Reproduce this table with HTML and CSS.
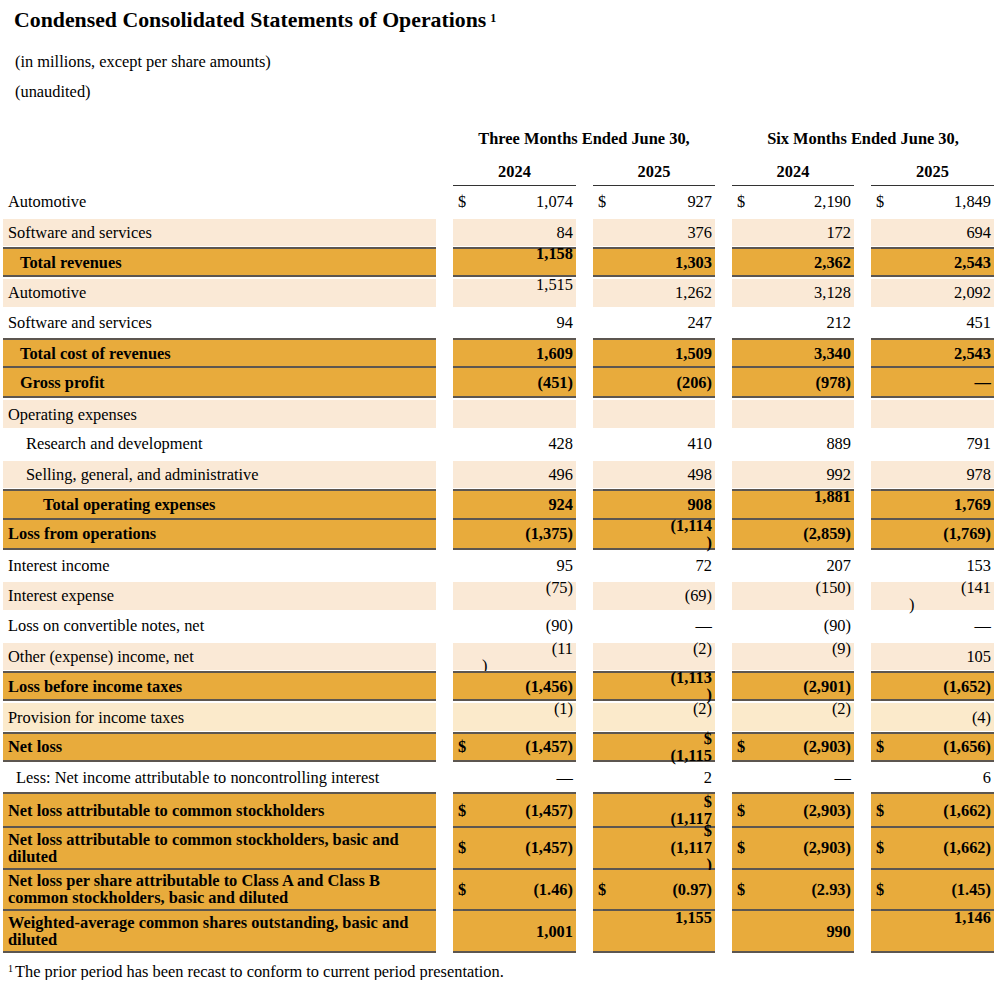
FILE: index.html
```
<!DOCTYPE html>
<html lang="en">
<head>
<meta charset="utf-8">
<title>Condensed Consolidated Statements of Operations</title>
<link rel="stylesheet" href="styles.css">
</head>
<body>
<div class="page">
  <h1 class="title">Condensed Consolidated Statements of Operations<sup class="fn">1</sup></h1>
  <p class="note first">(in millions, except per share amounts)</p>
  <p class="note">(unaudited)</p>

  <div class="sheet">
    <div class="hrow">
      <div class="blank"></div>
      <div class="period">Three Months Ended June 30,</div>
      <div class="period">Six Months Ended June 30,</div>
    </div>
    <div class="hrow years">
      <div class="blank"></div>
      <div class="year">2024</div>
      <div class="year">2025</div>
      <div class="year">2024</div>
      <div class="year">2025</div>
    </div>

    <div class="row">
      <div class="lbl">Automotive</div>
      <div class="v"><span class="cur">$</span><span class="num">1,074</span></div>
      <div class="v"><span class="cur">$</span><span class="num">927</span></div>
      <div class="v"><span class="cur">$</span><span class="num">2,190</span></div>
      <div class="v"><span class="cur">$</span><span class="num">1,849</span></div>
    </div>
    <div class="row light">
      <div class="lbl">Software and services</div>
      <div class="v"><span class="num">84</span></div>
      <div class="v"><span class="num">376</span></div>
      <div class="v"><span class="num">172</span></div>
      <div class="v"><span class="num">694</span></div>
    </div>
    <div class="row total">
      <div class="lbl i1">Total revenues</div>
      <div class="v"><span class="num up">1,158</span></div>
      <div class="v"><span class="num">1,303</span></div>
      <div class="v"><span class="num">2,362</span></div>
      <div class="v"><span class="num">2,543</span></div>
    </div>
    <div class="row light">
      <div class="lbl">Automotive</div>
      <div class="v"><span class="num up">1,515</span></div>
      <div class="v"><span class="num">1,262</span></div>
      <div class="v"><span class="num">3,128</span></div>
      <div class="v"><span class="num">2,092</span></div>
    </div>
    <div class="row">
      <div class="lbl">Software and services</div>
      <div class="v"><span class="num">94</span></div>
      <div class="v"><span class="num">247</span></div>
      <div class="v"><span class="num">212</span></div>
      <div class="v"><span class="num">451</span></div>
    </div>
    <div class="row total">
      <div class="lbl i1">Total cost of revenues</div>
      <div class="v"><span class="num">1,609</span></div>
      <div class="v"><span class="num">1,509</span></div>
      <div class="v"><span class="num">3,340</span></div>
      <div class="v"><span class="num">2,543</span></div>
    </div>
    <div class="row total">
      <div class="lbl i1">Gross profit</div>
      <div class="v"><span class="num">(451)</span></div>
      <div class="v"><span class="num">(206)</span></div>
      <div class="v"><span class="num">(978)</span></div>
      <div class="v"><span class="num">—</span></div>
    </div>
    <div class="row light">
      <div class="lbl">Operating expenses</div>
      <div class="v"></div>
      <div class="v"></div>
      <div class="v"></div>
      <div class="v"></div>
    </div>
    <div class="row">
      <div class="lbl i2">Research and development</div>
      <div class="v"><span class="num">428</span></div>
      <div class="v"><span class="num">410</span></div>
      <div class="v"><span class="num">889</span></div>
      <div class="v"><span class="num">791</span></div>
    </div>
    <div class="row light">
      <div class="lbl i2">Selling, general, and administrative</div>
      <div class="v"><span class="num">496</span></div>
      <div class="v"><span class="num">498</span></div>
      <div class="v"><span class="num">992</span></div>
      <div class="v"><span class="num">978</span></div>
    </div>
    <div class="row total">
      <div class="lbl i3">Total operating expenses</div>
      <div class="v"><span class="num">924</span></div>
      <div class="v"><span class="num">908</span></div>
      <div class="v"><span class="num up">1,881</span></div>
      <div class="v"><span class="num">1,769</span></div>
    </div>
    <div class="row total">
      <div class="lbl">Loss from operations</div>
      <div class="v"><span class="num">(1,375)</span></div>
      <div class="v"><span class="num">(1,114<br>)</span></div>
      <div class="v"><span class="num">(2,859)</span></div>
      <div class="v"><span class="num">(1,769)</span></div>
    </div>
    <div class="row">
      <div class="lbl">Interest income</div>
      <div class="v"><span class="num">95</span></div>
      <div class="v"><span class="num">72</span></div>
      <div class="v"><span class="num">207</span></div>
      <div class="v"><span class="num">153</span></div>
    </div>
    <div class="row light">
      <div class="lbl">Interest expense</div>
      <div class="v"><span class="num up">(75)</span></div>
      <div class="v"><span class="num">(69)</span></div>
      <div class="v"><span class="num up">(150)</span></div>
      <div class="v"><span class="num split">(141<span class="tail tail-b">)</span></span></div>
    </div>
    <div class="row">
      <div class="lbl">Loss on convertible notes, net</div>
      <div class="v"><span class="num">(90)</span></div>
      <div class="v"><span class="num">—</span></div>
      <div class="v"><span class="num">(90)</span></div>
      <div class="v"><span class="num">—</span></div>
    </div>
    <div class="row light">
      <div class="lbl">Other (expense) income, net</div>
      <div class="v"><span class="num split">(11<span class="tail tail-a">)</span></span></div>
      <div class="v"><span class="num up">(2)</span></div>
      <div class="v"><span class="num up">(9)</span></div>
      <div class="v"><span class="num">105</span></div>
    </div>
    <div class="row total">
      <div class="lbl">Loss before income taxes</div>
      <div class="v"><span class="num">(1,456)</span></div>
      <div class="v"><span class="num">(1,113<br>)</span></div>
      <div class="v"><span class="num">(2,901)</span></div>
      <div class="v"><span class="num">(1,652)</span></div>
    </div>
    <div class="row pale">
      <div class="lbl">Provision for income taxes</div>
      <div class="v"><span class="num up">(1)</span></div>
      <div class="v"><span class="num up">(2)</span></div>
      <div class="v"><span class="num up">(2)</span></div>
      <div class="v"><span class="num">(4)</span></div>
    </div>
    <div class="row total">
      <div class="lbl">Net loss</div>
      <div class="v"><span class="cur">$</span><span class="num">(1,457)</span></div>
      <div class="v"><span class="num">$<br>(1,115</span></div>
      <div class="v"><span class="cur">$</span><span class="num">(2,903)</span></div>
      <div class="v"><span class="cur">$</span><span class="num">(1,656)</span></div>
    </div>
    <div class="row">
      <div class="lbl i4">Less: Net income attributable to noncontrolling interest</div>
      <div class="v"><span class="num">—</span></div>
      <div class="v"><span class="num">2</span></div>
      <div class="v"><span class="num">—</span></div>
      <div class="v"><span class="num">6</span></div>
    </div>
    <div class="row total mid">
      <div class="lbl">Net loss attributable to common stockholders</div>
      <div class="v"><span class="cur">$</span><span class="num">(1,457)</span></div>
      <div class="v"><span class="num">$<br>(1,117</span></div>
      <div class="v"><span class="cur">$</span><span class="num">(2,903)</span></div>
      <div class="v"><span class="cur">$</span><span class="num">(1,662)</span></div>
    </div>
    <div class="row total tall">
      <div class="lbl">Net loss attributable to common stockholders, basic and<br>diluted</div>
      <div class="v"><span class="cur">$</span><span class="num">(1,457)</span></div>
      <div class="v"><span class="num">$<br>(1,117<br>)</span></div>
      <div class="v"><span class="cur">$</span><span class="num">(2,903)</span></div>
      <div class="v"><span class="cur">$</span><span class="num">(1,662)</span></div>
    </div>
    <div class="row total tall">
      <div class="lbl">Net loss per share attributable to Class A and Class B<br>common stockholders, basic and diluted</div>
      <div class="v"><span class="cur">$</span><span class="num">(1.46)</span></div>
      <div class="v"><span class="cur">$</span><span class="num">(0.97)</span></div>
      <div class="v"><span class="cur">$</span><span class="num">(2.93)</span></div>
      <div class="v"><span class="cur">$</span><span class="num">(1.45)</span></div>
    </div>
    <div class="row total tall">
      <div class="lbl">Weighted-average common shares outstanding, basic and<br>diluted</div>
      <div class="v"><span class="num">1,001</span></div>
      <div class="v"><span class="num up2">1,155</span></div>
      <div class="v"><span class="num">990</span></div>
      <div class="v"><span class="num up2">1,146</span></div>
    </div>
  </div>

  <p class="footnote"><sup class="fn-mark">1</sup>The prior period has been recast to conform to current period presentation.</p>
</div>
</body>
</html>
```

FILE: styles.css
```
html, body {
  margin: 0;
  padding: 0;
  background: #ffffff;
}

body {
  font-family: "Liberation Serif", "Times New Roman", serif;
  font-size: 16.4px;
  line-height: 17px;
  color: #000;
}

.page {
  width: 1000px;
}

.title {
  margin: 8px 0 0 14px;
  font-size: 21.8px;
  line-height: 24px;
  font-weight: bold;
}

.fn {
  font-size: 12px;
  vertical-align: 5px;
  line-height: 0;
  margin-left: 4px;
}

.note {
  margin: 12px 0 0 15px;
  line-height: 18px;
}

.note.first {
  margin-top: 21px;
}

.sheet {
  display: grid;
  grid-template-columns: 433px 123px 122px 122px 123px;
  column-gap: 17px;
  margin: 22px 0 0 3px;
}

.hrow,
.row {
  display: contents;
}

.hrow > div {
  height: 30px;
  box-sizing: border-box;
  font-weight: bold;
  text-align: center;
  display: flex;
  align-items: center;
  justify-content: center;
}

.hrow .period {
  grid-column: span 2;
}

.hrow.years > div {
  height: 33.4px;
  align-items: flex-start;
  padding-top: 10px;
}

.hrow.years .year {
  border-bottom: 1px solid #333;
}

.row > div {
  height: 30.3px;
  box-sizing: border-box;
  display: flex;
  align-items: center;
}

.row.mid > div {
  height: 35.6px;
}

.row.tall > div {
  height: 41.7px;
}

.lbl {
  padding-left: 5px;
}

.lbl.i1 { padding-left: 17px; }
.lbl.i2 { padding-left: 23px; }
.lbl.i3 { padding-left: 40px; }
.lbl.i4 { padding-left: 13px; }

.v {
  padding: 0 3px 0 5px;
}

.cur {
  flex: none;
}

.num {
  margin-left: auto;
  text-align: right;
  white-space: nowrap;
}

.num.up {
  padding-bottom: 17px;
}

.num.up2 {
  padding-bottom: 27px;
}

.num.split {
  flex: 1;
  display: block;
}

.tail {
  display: block;
  text-align: left;
}

.tail-a { padding-left: 24px; }
.tail-b { padding-left: 33px; }

.light > div,
.pale > div {
  background-clip: padding-box;
  border-top: 2px solid transparent;
  border-bottom: 1px solid transparent;
}

.light > div {
  background-color: #fae9d6;
}

.pale > div {
  background-color: #fbeacb;
}

.total > div {
  background-color: #e8ab3c;
  font-weight: bold;
  border-bottom: 2px solid #5c5650;
}

.row:not(.total) + .total > div {
  border-top: 2px solid #5c5650;
}

.footnote {
  margin: 10px 0 0 8px;
  line-height: 17px;
}

.fn-mark {
  font-size: 10px;
  vertical-align: 5px;
  line-height: 0;
  margin-right: 2px;
}
```
